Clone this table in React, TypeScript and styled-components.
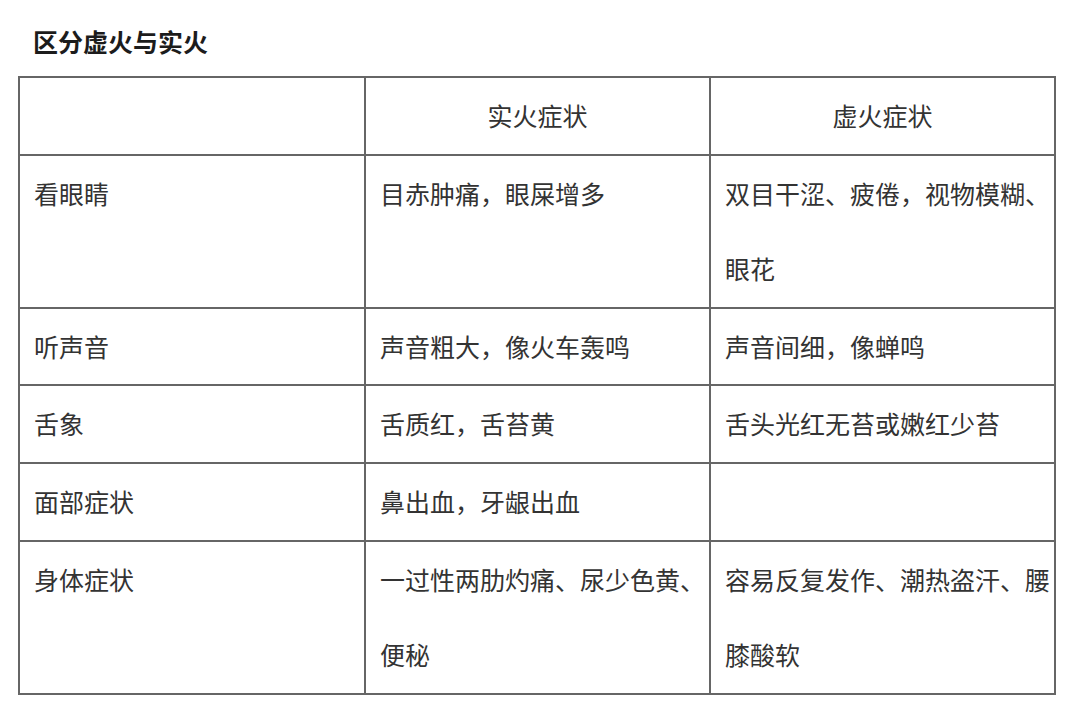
import React from "react";
import styled, { createGlobalStyle } from "styled-components";

const Global = createGlobalStyle`
  html, body { margin: 0; padding: 0; background: #ffffff; }
  body { font-family: "Noto Sans CJK SC", "Noto Sans", sans-serif; }
`;

const Page = styled.div`
  padding: 24px 0 0 18px;
  width: 1080px;
  box-sizing: border-box;
`;

const Title = styled.h1`
  margin: 0 0 18px 15px;
  font-size: 25px;
  line-height: 34px;
  font-weight: 700;
  color: #1c1c1c;
`;

const Table = styled.table`
  width: 1036px;
  border-collapse: collapse;
  table-layout: fixed;
`;

const Cell = styled.td<{ $center?: boolean }>`
  border: 2px solid #666;
  padding: ${(p) => (p.$center ? "0 8px" : "0 2px 0 14px")};
  font-size: 25px;
  line-height: 75.6px;
  color: #333;
  vertical-align: top;
  text-align: ${(p) => (p.$center ? "center" : "left")};
  word-break: break-all;
`;

const rows: [string, string, string][] = [
  ["看眼睛", "目赤肿痛，眼屎增多", "双目干涩、疲倦，视物模糊、眼花"],
  ["听声音", "声音粗大，像火车轰鸣", "声音间细，像蝉鸣"],
  ["舌象", "舌质红，舌苔黄", "舌头光红无苔或嫩红少苔"],
  ["面部症状", "鼻出血，牙龈出血", ""],
  ["身体症状", "一过性两肋灼痛、尿少色黄、便秘", "容易反复发作、潮热盗汗、腰膝酸软"],
];

export default function App() {
  return (
    <Page>
      <Global />
      <Title>区分虚火与实火</Title>
      <Table>
        <colgroup>
          <col style={{ width: 346 }} />
          <col style={{ width: 345 }} />
          <col style={{ width: 345 }} />
        </colgroup>
        <tbody>
          <tr>
            <Cell></Cell>
            <Cell $center>实火症状</Cell>
            <Cell $center>虚火症状</Cell>
          </tr>
          {rows.map((r) => (
            <tr key={r[0]}>
              <Cell>{r[0]}</Cell>
              <Cell>{r[1]}</Cell>
              <Cell>{r[2]}</Cell>
            </tr>
          ))}
        </tbody>
      </Table>
    </Page>
  );
}
